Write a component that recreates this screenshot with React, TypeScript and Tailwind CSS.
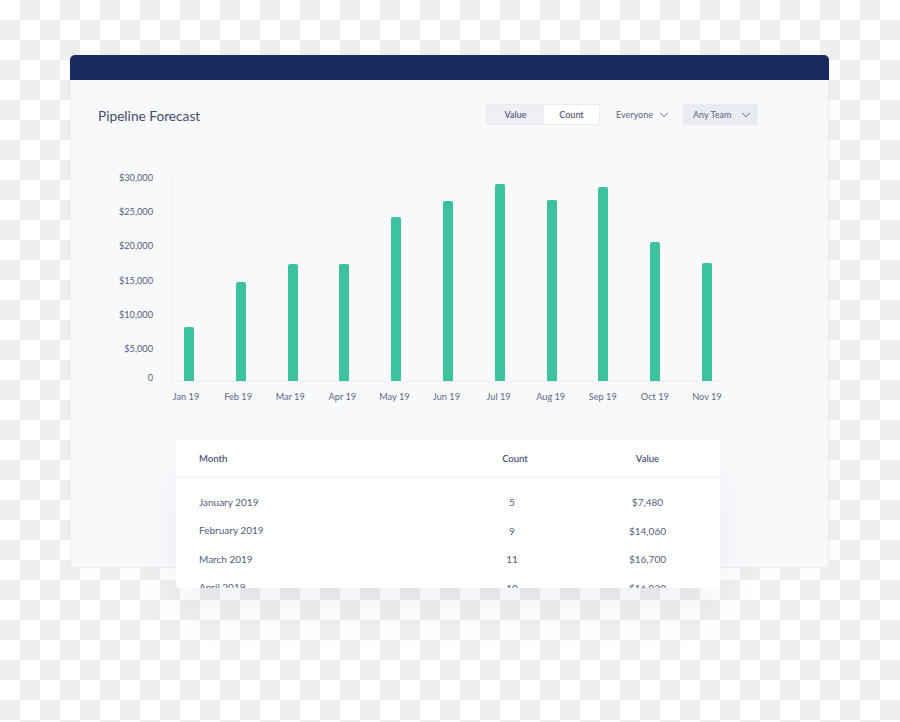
import { ChevronDown } from "lucide-react";

const bars = [
  { label: "Jan 19", top: 328 },
  { label: "Feb 19", top: 283 },
  { label: "Mar 19", top: 265 },
  { label: "Apr 19", top: 265 },
  { label: "May 19", top: 218 },
  { label: "Jun 19", top: 202 },
  { label: "Jul 19", top: 185 },
  { label: "Aug 19", top: 201 },
  { label: "Sep 19", top: 188 },
  { label: "Oct 19", top: 243 },
  { label: "Nov 19", top: 264 },
];

const ticks = ["$30,000", "$25,000", "$20,000", "$15,000", "$10,000", "$5,000"];

const rows = [
  { month: "January 2019", count: "5", value: "$7,480" },
  { month: "February 2019", count: "9", value: "$14,060" },
  { month: "March 2019", count: "11", value: "$16,700" },
  { month: "April 2019", count: "10", value: "$16,020" },
];

const BASELINE = 382;

export default function App() {
  return (
    <div className="min-h-screen w-full overflow-hidden bg-[conic-gradient(#efefef_25%,#ffffff_0_50%,#efefef_0_75%,#ffffff_0)] bg-[size:40px_40px] pt-[55px] pl-[70px] font-['Lato',sans-serif] text-[#545d7c]">
      <div className="mb-[20px] w-[759px] rounded-t-[5px] rounded-b-[4px] border-x border-b border-[#e9edf4] bg-[#f8f9fb] shadow-[0_0_12px_rgba(120,130,160,0.05)]">
        <div className="-mx-px h-[25px] rounded-t-[5px] bg-[#1a2b5f]" />

        <div className="flex items-center justify-between pt-[24px] pr-[70px] pl-[27px]">
          <h1 className="translate-y-px text-[13.7px] leading-[21px] font-normal text-[#434d6e]">Pipeline Forecast</h1>
          <div className="flex items-center text-[9px] leading-none">
            <div className="flex h-[21px] w-[114px] rounded-[2px] border border-[#e9ebf1] bg-[#eef0f5]">
              <span className="flex w-[57px] items-center justify-center font-semibold text-[#566080]">Value</span>
              <span className="flex flex-1 items-center justify-center bg-white font-semibold text-[#566080]">Count</span>
            </div>
            <div className="ml-[16px] flex w-[67px] items-center justify-between pr-[12px] text-[#5a6383]">
              <span>Everyone</span>
              <ChevronDown size={14} strokeWidth={1.7} className="shrink-0" />
            </div>
            <div className="flex h-[21px] w-[75px] items-center justify-between rounded-[2px] bg-[#e9ecf2] pr-[5px] pl-[10px] text-[#5a6383]">
              <span>Any Team</span>
              <ChevronDown size={14} strokeWidth={1.7} className="shrink-0" />
            </div>
          </div>
        </div>

        <div className="mt-[47px] flex">
          <div className="flex h-[212px] w-[82px] translate-y-px flex-col items-end text-[9.2px] leading-[10px] text-[#545d7c]">
            {ticks.map((t) => (
              <span key={t} className="flex h-[34.2px] items-start">
                {t}
              </span>
            ))}
            <span className="-mt-[5px]">0</span>
          </div>
          <div className="ml-[19px] flex h-[210px] w-[551px] items-end justify-between border-b border-l border-[#eceef3] pr-[11px] pl-[11px]">
            {bars.map((b) => (
              <div
                key={b.label}
                className="w-[10px] rounded-t-[2px] bg-[#3bc29f]"
                style={{ height: BASELINE - b.top }}
              />
            ))}
          </div>
        </div>

        <div className="mt-[7px] ml-[89px] grid w-[573px] grid-cols-11 text-center text-[9.2px] leading-[12px] text-[#5f6886]">
          {bars.map((b) => (
            <span key={b.label}>{b.label}</span>
          ))}
        </div>

        <div className="relative z-10 mt-[37px] -mb-[21px] ml-[105px] h-[148px] w-[544px] overflow-hidden rounded-[4px] bg-white shadow-[0_24px_40px_-4px_rgba(110,125,170,0.1)]">
          <div className="grid h-[38px] grid-cols-[279px_120px_145px] items-center border-b-2 border-[#f3f4f7] pt-[2px] text-[9.5px] font-semibold text-[#4a5372]">
            <span className="pl-[23px]">Month</span>
            <span className="text-center">Count</span>
            <span className="text-center">Value</span>
          </div>
          <div className="pt-[10px] text-[10px] text-[#545d7c]">
            {rows.map((r) => (
              <div key={r.month} className="grid h-[28.5px] grid-cols-[279px_120px_145px] items-center">
                <span className="pl-[23px]">{r.month}</span>
                <span className="pt-px pr-[6px] text-center">{r.count}</span>
                <span className="pt-px text-center">{r.value}</span>
              </div>
            ))}
          </div>
        </div>
      </div>
    </div>
  );
}
